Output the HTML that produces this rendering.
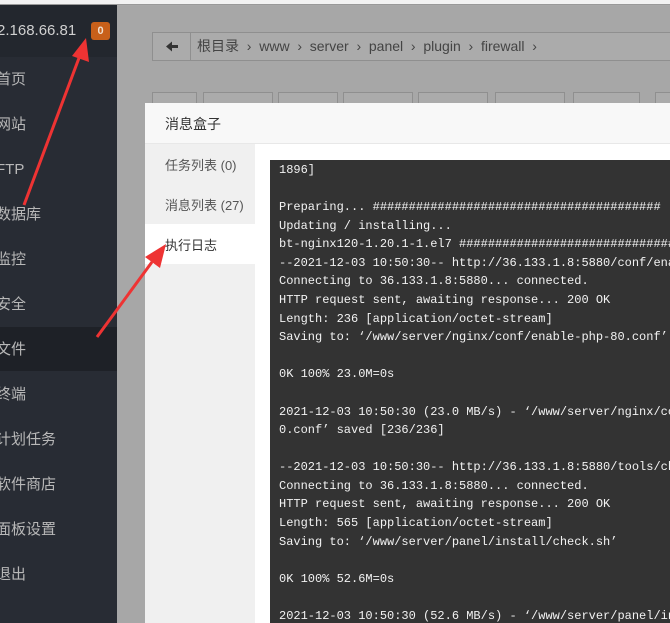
<!DOCTYPE html>
<html><head><meta charset="utf-8"><style>
*{margin:0;padding:0;box-sizing:border-box}
html,body{width:670px;height:623px;overflow:hidden}
body{position:relative;background:#a9a9a9;font-family:"Liberation Sans","Noto Sans CJK SC",sans-serif}
.top{position:absolute;left:0;top:0;width:670px;height:5px;background:#f2f2f2;border-bottom:1px solid #999}
.side{position:absolute;left:0;top:5px;width:117px;height:618px;background:#282c34}
.shead{position:absolute;left:0;top:0;width:117px;height:52px;background:#23272e}
.ip{position:absolute;left:-3px;top:17px;color:#d0d0d0;font-size:15px}
.badge{position:absolute;left:91px;top:17px;width:19px;height:18px;background:#c8601a;border-radius:3px;color:#f0e0d0;font-size:11px;font-weight:bold;text-align:center;line-height:18px}
.mi{position:absolute;left:-4px;width:117px;height:44px;color:#b8b8b8;font-size:15px;line-height:46px}
.mi.act{background:#1e2127}
.gray{position:absolute;left:117px;top:6px;width:553px;height:617px;background:#a7a7a7}
.bc{position:absolute;left:152px;top:32px;width:530px;height:29px;border:1px solid #8f8f8f;background:#ababab;font-size:14px;color:#444;line-height:27px}
.bc .bk{position:absolute;left:0;top:0;width:38px;height:27px;border-right:1px solid #8f8f8f}
.btn{position:absolute;top:92px;height:14px;border:1px solid #8f8f8f;border-bottom:none;background:#ababab}
.modal{position:absolute;left:145px;top:103px;width:525px;height:520px;background:#fff;overflow:hidden}
.mh{height:41px;background:#f8f8f8;border-bottom:1px solid #e8e8e8;font-size:14px;color:#333;line-height:42px;padding-left:20px}
.tabs{position:absolute;left:0;top:41px;width:110px;height:480px;background:#f0f0f0}
.tab{height:40px;line-height:44px;padding-left:20px;font-size:13px;color:#555}
.tab.on{background:#fff;color:#333}
.log{position:absolute;left:125px;top:57px;width:420px;height:470px;background:#333;overflow:hidden}
pre{font-family:"Liberation Mono",monospace;font-size:12px;line-height:18.58px;color:#f2f2f2;padding:1px 0 0 9px;white-space:pre}
svg.ov{position:absolute;left:0;top:0}
</style></head><body>
<div class="top"></div>
<div class="gray"></div>
<div class="bc"><div class="bk"><svg width="38" height="27" style="position:absolute;left:0;top:0"><polygon points="13,13.5 19,8.5 19,12 25,12 25,15 19,15 19,18.5" fill="#333"/></svg></div><span style="position:absolute;left:44px;white-space:pre">根目录  ›  www  ›  server  ›  panel  ›  plugin  ›  firewall  ›</span></div>
<div class="btn" style="left:152px;width:45px"></div>
<div class="btn" style="left:203px;width:70px"></div>
<div class="btn" style="left:278px;width:60px"></div>
<div class="btn" style="left:343px;width:70px"></div>
<div class="btn" style="left:418px;width:70px"></div>
<div class="btn" style="left:495px;width:70px"></div>
<div class="btn" style="left:573px;width:67px"></div>
<div class="btn" style="left:655px;width:30px"></div>
<div class="side">
<div class="shead"><div class="ip">2.168.66.81</div><div class="badge">0</div></div>
<div class="mi" style="top:52px">首页</div>
<div class="mi" style="top:97px">网站</div>
<div class="mi" style="top:142px">FTP</div>
<div class="mi" style="top:187px">数据库</div>
<div class="mi" style="top:232px">监控</div>
<div class="mi" style="top:277px">安全</div>
<div class="mi act" style="top:322px;left:0"><span style="margin-left:-4px">文件</span></div>
<div class="mi" style="top:367px">终端</div>
<div class="mi" style="top:412px">计划任务</div>
<div class="mi" style="top:457px">软件商店</div>
<div class="mi" style="top:502px">面板设置</div>
<div class="mi" style="top:547px">退出</div>
</div>
<div class="modal">
<div class="mh">消息盒子</div>
<div class="tabs">
<div class="tab">任务列表 (0)</div>
<div class="tab">消息列表 (27)</div>
<div class="tab on">执行日志</div>
</div>
<div class="log"><pre>1896]

Preparing... ########################################
Updating / installing...
bt-nginx120-1.20.1-1.el7 ##################################
--2021-12-03 10:50:30-- http://36.133.1.8:5880/conf/enable-php-80.conf
Connecting to 36.133.1.8:5880... connected.
HTTP request sent, awaiting response... 200 OK
Length: 236 [application/octet-stream]
Saving to: ‘/www/server/nginx/conf/enable-php-80.conf’

0K 100% 23.0M=0s

2021-12-03 10:50:30 (23.0 MB/s) - ‘/www/server/nginx/conf/enable-php-8
0.conf’ saved [236/236]

--2021-12-03 10:50:30-- http://36.133.1.8:5880/tools/check.sh
Connecting to 36.133.1.8:5880... connected.
HTTP request sent, awaiting response... 200 OK
Length: 565 [application/octet-stream]
Saving to: ‘/www/server/panel/install/check.sh’

0K 100% 52.6M=0s

2021-12-03 10:50:30 (52.6 MB/s) - ‘/www/server/panel/install/check.sh’</pre></div>
</div>
<svg class="ov" width="670" height="623">
<line x1="24" y1="205" x2="79" y2="58" stroke="#ee3333" stroke-width="3"/>
<polygon points="86,38 89,62 72,56" fill="#ee3333"/>
<line x1="97" y1="337" x2="152" y2="262" stroke="#ee3333" stroke-width="3"/>
<polygon points="166,244 160,268 145,257" fill="#ee3333"/>
</svg>
</body></html>
